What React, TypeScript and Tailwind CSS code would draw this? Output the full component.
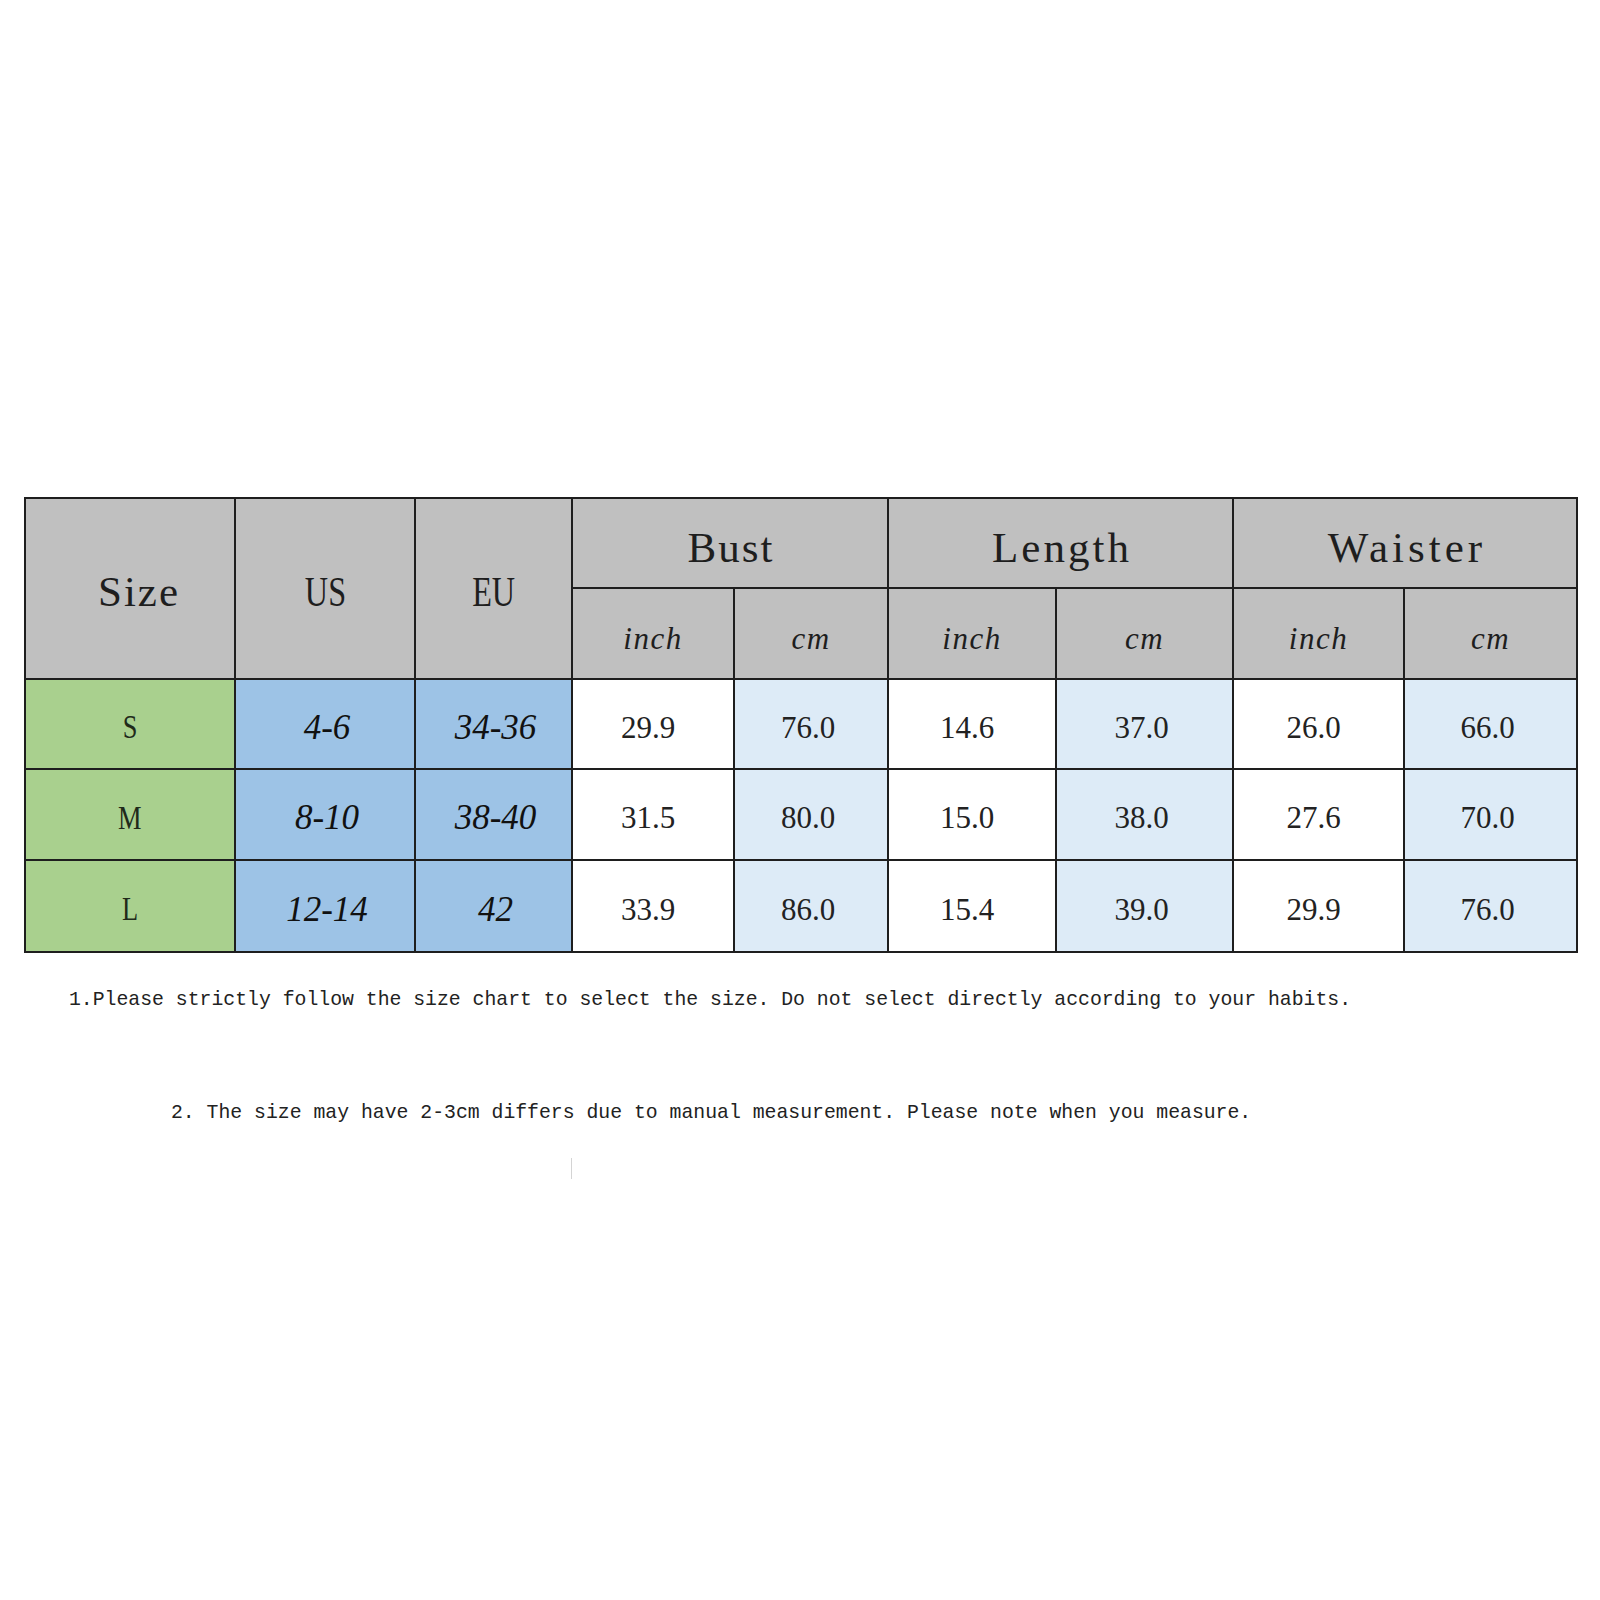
import React from "react";

const mono = "font-['Liberation_Mono','DejaVu_Sans_Mono',monospace]";
const serif = "font-['Liberation_Serif','DejaVu_Serif',serif]";

type Row = { size: string; us: string; eu: string; vals: string[] };

const rows: Row[] = [
  { size: "S", us: "4-6", eu: "34-36", vals: ["29.9", "76.0", "14.6", "37.0", "26.0", "66.0"] },
  { size: "M", us: "8-10", eu: "38-40", vals: ["31.5", "80.0", "15.0", "38.0", "27.6", "70.0"] },
  { size: "L", us: "12-14", eu: "42", vals: ["33.9", "86.0", "15.4", "39.0", "29.9", "76.0"] },
];

const cell = "flex items-center justify-center";
const head = `${cell} bg-[#c0c0c0] ${serif} text-[43px] text-[#1e1e1e]`;

export default function App() {
  return (
    <div className="min-h-[1600px] w-[1600px] bg-white pt-[497px]">
      <div className="ml-[24px] grid w-[1554px] grid-cols-[208px_178px_155px_160px_152px_166px_175px_169px_171px] grid-rows-[88px_89px_88px_89px_90px] gap-[2px] border-2 border-[#1e1e1e] bg-[#1e1e1e]">
        {/* header row 1 */}
        <div className={`${head} row-span-2 pl-[18px] pt-[8px] tracking-[2px]`}>Size</div>
        <div className={`${head} row-span-2 pt-[8px]`}>
          <span className="inline-block scale-x-[0.75]">US</span>
        </div>
        <div className={`${head} row-span-2 pt-[8px]`}>
          <span className="inline-block scale-x-[0.75]">EU</span>
        </div>
        <div className={`${head} col-span-2 pl-[2px] pt-[10px] tracking-[2px]`}>Bust</div>
        <div className={`${head} col-span-2 pl-[3px] pt-[10px] tracking-[3px]`}>Length</div>
        <div className={`${head} col-span-2 pl-[4px] pt-[10px] tracking-[4px]`}>Waister</div>
        {/* header row 2 */}
        {["inch", "cm", "inch", "cm", "inch", "cm"].map((u, i) => (
          <div key={i} className={`${cell} bg-[#c0c0c0] ${serif} pt-[12px] text-[31px] italic tracking-[1.5px] text-[#1e1e1e]`}>
            {u}
          </div>
        ))}
        {/* data rows */}
        {rows.map((r) => (
          <React.Fragment key={r.size}>
            <div className={`${cell} bg-[#a9d08e] ${serif} pt-[8px] text-[33px] text-[#1f2a1a]`}>
              <span className="inline-block scale-x-[0.8]">{r.size}</span>
            </div>
            <div className={`${cell} bg-[#9dc3e6] ${serif} pl-[4px] pt-[8px] text-[35px] italic text-[#111]`}>{r.us}</div>
            <div className={`${cell} bg-[#9dc3e6] ${serif} pl-[4px] pt-[8px] text-[35px] italic text-[#111]`}>{r.eu}</div>
            {r.vals.map((v, i) => (
              <div
                key={i}
                className={`${cell} ${i % 2 === 1 ? "bg-[#ddebf7]" : "bg-white"} ${serif} pt-[8px] text-[31px] text-[#222]`}
              >
                <span className={i % 2 === 0 ? "mr-[10px]" : "mr-[6px]"}>{v}</span>
              </div>
            ))}
          </React.Fragment>
        ))}
      </div>

      <p className={`mt-[35px] pl-[69px] ${mono} text-[19.8px] leading-[24px] whitespace-pre text-[#222]`}>
        1.Please strictly follow the size chart to select the size. Do not select directly according to your habits.
      </p>
      <p className={`mt-[89px] pl-[171px] ${mono} text-[19.8px] leading-[24px] whitespace-pre text-[#222]`}>
        2. The size may have 2-3cm differs due to manual measurement. Please note when you measure.
      </p>
      <div className="ml-[571px] mt-[33px] h-[21px] w-px bg-[#d4d4d4]" />
    </div>
  );
}
